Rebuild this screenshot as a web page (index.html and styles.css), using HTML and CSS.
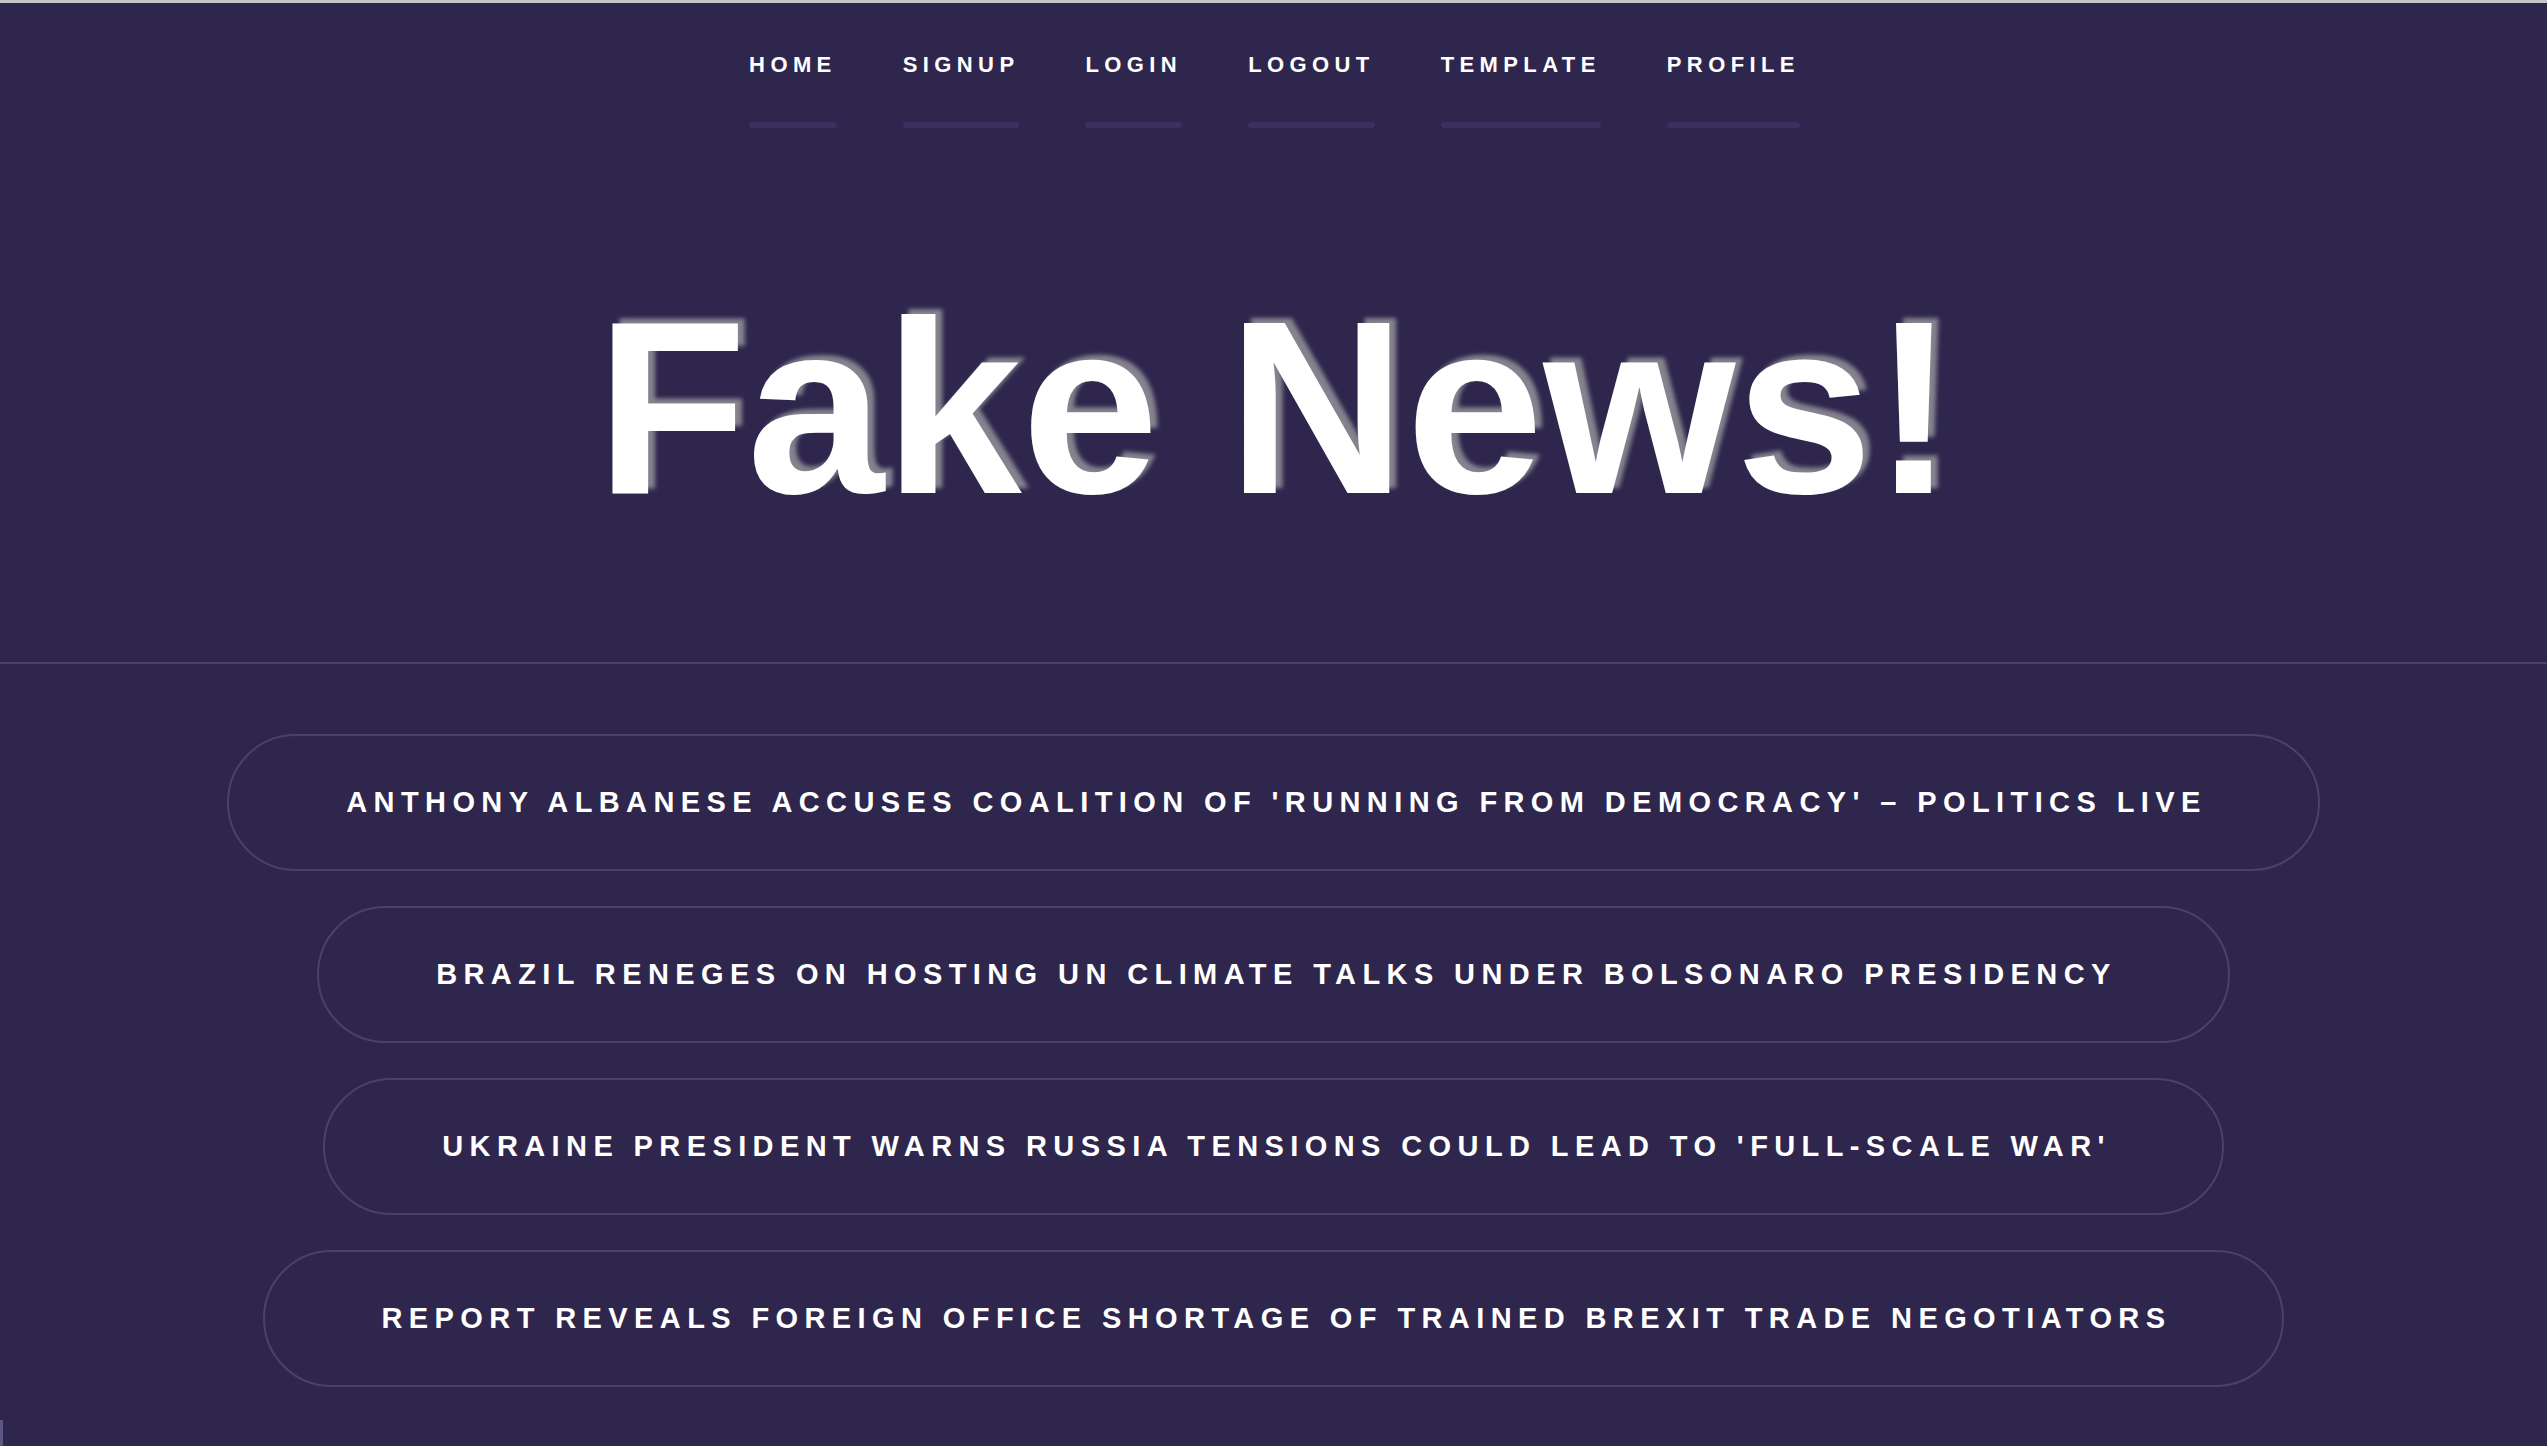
FILE: index.html
```html
<!DOCTYPE html>
<html lang="en">
<head>
<meta charset="utf-8">
<title>Fake News!</title>
<link rel="stylesheet" href="styles.css">
</head>
<body>
<div class="topline"></div>
<header class="site-header">
  <nav class="nav">
    <a class="nav-link" href="#">HOME</a>
    <a class="nav-link" href="#">SIGNUP</a>
    <a class="nav-link" href="#">LOGIN</a>
    <a class="nav-link" href="#">LOGOUT</a>
    <a class="nav-link" href="#">TEMPLATE</a>
    <a class="nav-link" href="#">PROFILE</a>
  </nav>
  <h1 class="title">Fake News!</h1>
</header>
<main class="headlines">
  <a class="pill" href="#">ANTHONY ALBANESE ACCUSES COALITION OF 'RUNNING FROM DEMOCRACY' – POLITICS LIVE</a>
  <a class="pill" href="#">BRAZIL RENEGES ON HOSTING UN CLIMATE TALKS UNDER BOLSONARO PRESIDENCY</a>
  <a class="pill" href="#">UKRAINE PRESIDENT WARNS RUSSIA TENSIONS COULD LEAD TO 'FULL-SCALE WAR'</a>
  <a class="pill" href="#">REPORT REVEALS FOREIGN OFFICE SHORTAGE OF TRAINED BREXIT TRADE NEGOTIATORS</a>
</main>
<div class="corner-mark"></div>
</body>
</html>
```
FILE: styles.css
```css
html, body {
  margin: 0;
  padding: 0;
}
body {
  background: #2e264d;
  color: #ffffff;
  font-family: "Liberation Sans", Arial, sans-serif;
  min-height: 1446px;
  overflow: hidden;
}
.topline {
  height: 3px;
  background: #c4c4c6;
}
.site-header {
  border-bottom: 2px solid #4a4269;
  padding-bottom: 131px;
}
.nav {
  display: flex;
  justify-content: center;
  gap: 66px;
  padding-top: 49px;
  padding-left: 2px;
}
.nav-link {
  display: block;
  color: #ffffff;
  text-decoration: none;
  font-weight: 700;
  font-size: 22px;
  line-height: 25px;
  letter-spacing: 5.4px;
}
.nav-link::after {
  content: "";
  display: block;
  height: 6px;
  margin-top: 45px;
  border-radius: 3px;
  background: #3a3062;
}
.title {
  margin: 156px 0 0;
  padding-left: 4px;
  text-align: center;
  font-size: 247px;
  line-height: 247px;
  font-weight: 700;
  color: #ffffff;
  text-shadow: 7px -5px 4px #86838f;
}
.headlines {
  display: flex;
  flex-direction: column;
  align-items: center;
  gap: 35px;
  padding-top: 70px;
}
.pill {
  display: block;
  border: 2px solid #4a4269;
  border-radius: 70px;
  padding: 50px 111px 50px 117px;
  color: #ffffff;
  text-decoration: none;
  font-weight: 700;
  font-size: 29px;
  line-height: 33px;
  letter-spacing: 6.4px;
  white-space: nowrap;
}
.corner-mark {
  position: fixed;
  left: 0;
  bottom: 0;
  width: 3px;
  height: 26px;
  background: #5d5682;
}
```
